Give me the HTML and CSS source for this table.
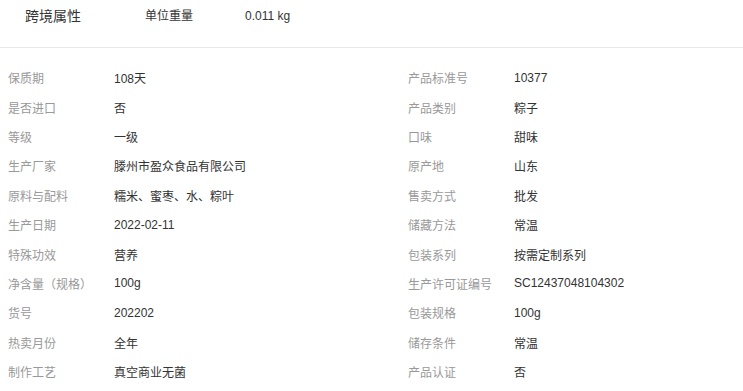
FILE: index.html
```html
<!DOCTYPE html>
<html lang="zh">
<head>
<meta charset="utf-8">
<link rel="stylesheet" href="styles.css">
</head>
<body>
<div class="top">
  <span class="top-title">跨境属性</span>
  <span class="top-label">单位重量</span>
  <span class="top-value">0.011 kg</span>
</div>
<div class="grid">
  <div class="item"><span class="label">保质期</span><span class="value">108天</span></div>
  <div class="item"><span class="label">产品标准号</span><span class="value">10377</span></div>
  <div class="item"><span class="label">是否进口</span><span class="value">否</span></div>
  <div class="item"><span class="label">产品类别</span><span class="value">粽子</span></div>
  <div class="item"><span class="label">等级</span><span class="value">一级</span></div>
  <div class="item"><span class="label">口味</span><span class="value">甜味</span></div>
  <div class="item"><span class="label">生产厂家</span><span class="value">滕州市盈众食品有限公司</span></div>
  <div class="item"><span class="label">原产地</span><span class="value">山东</span></div>
  <div class="item"><span class="label">原料与配料</span><span class="value">糯米、蜜枣、水、粽叶</span></div>
  <div class="item"><span class="label">售卖方式</span><span class="value">批发</span></div>
  <div class="item"><span class="label">生产日期</span><span class="value">2022-02-11</span></div>
  <div class="item"><span class="label">储藏方法</span><span class="value">常温</span></div>
  <div class="item"><span class="label">特殊功效</span><span class="value">营养</span></div>
  <div class="item"><span class="label">包装系列</span><span class="value">按需定制系列</span></div>
  <div class="item"><span class="label">净含量（规格）</span><span class="value">100g</span></div>
  <div class="item"><span class="label">生产许可证编号</span><span class="value">SC12437048104302</span></div>
  <div class="item"><span class="label">货号</span><span class="value">202202</span></div>
  <div class="item"><span class="label">包装规格</span><span class="value">100g</span></div>
  <div class="item"><span class="label">热卖月份</span><span class="value">全年</span></div>
  <div class="item"><span class="label">储存条件</span><span class="value">常温</span></div>
  <div class="item"><span class="label">制作工艺</span><span class="value">真空商业无菌</span></div>
  <div class="item"><span class="label">产品认证</span><span class="value">否</span></div>
</div>
</body>
</html>
```
FILE: styles.css
```css
html, body {
  margin: 0;
  padding: 0;
  background: #fff;
}
body {
  font-family: "Liberation Sans", "Noto Sans CJK SC", sans-serif;
  font-size: 12px;
  color: #333;
  overflow: hidden;
}
.top {
  height: 47px;
  border-bottom: 1px solid #e8e8e8;
  display: flex;
  align-items: flex-start;
  padding-left: 25px;
  padding-top: 6px;
  box-sizing: border-box;
  height: 48px;
}
.top-title {
  font-size: 14px;
  line-height: 20px;
  width: 120px;
  color: #333;
}
.top-label {
  font-size: 12px;
  line-height: 20px;
  width: 100px;
  color: #333;
}
.top-value {
  font-size: 12px;
  line-height: 20px;
  color: #333;
}
.grid {
  display: grid;
  grid-template-columns: 400px 1fr;
  padding: 15px 0 0 8px;
}
.item {
  display: flex;
  align-items: center;
  height: 29.4px;
}
.label {
  width: 106px;
  flex: none;
  color: #999;
}
.value {
  color: #333;
}
```
